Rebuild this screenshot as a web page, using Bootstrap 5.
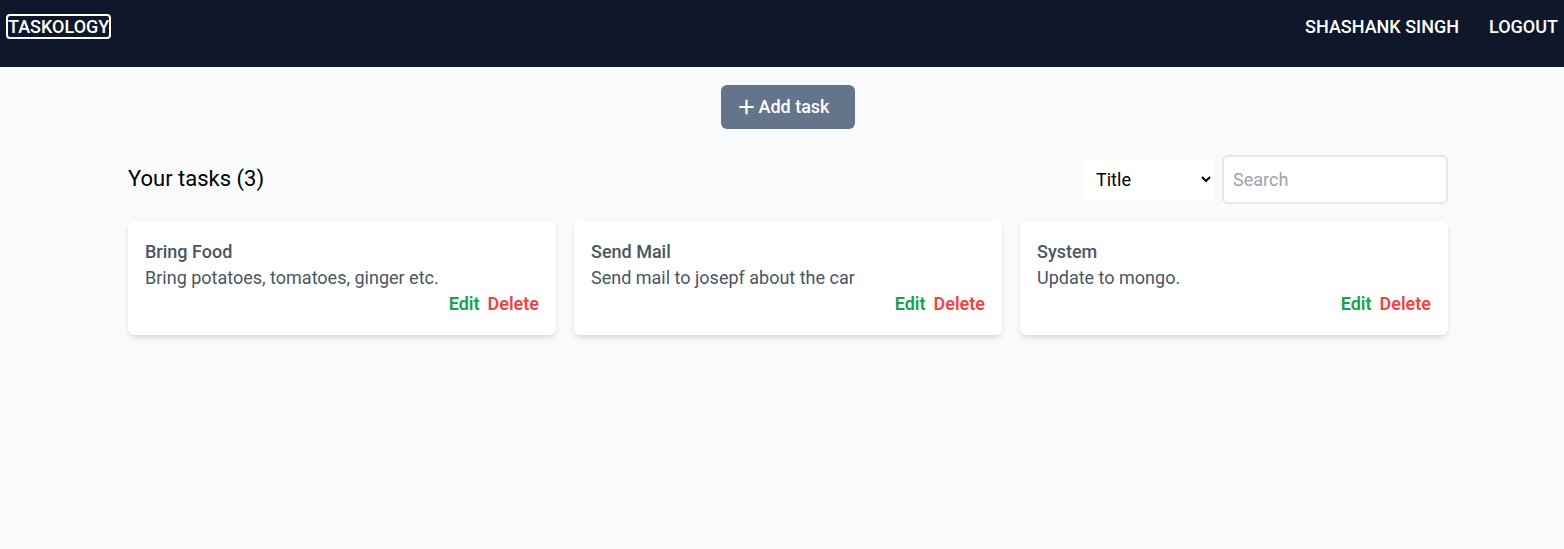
<!DOCTYPE html>
<html lang="en">
<head>
<meta charset="utf-8">
<meta name="viewport" content="width=device-width, initial-scale=1">
<title>Taskology</title>
<link href="https://cdn.jsdelivr.net/npm/bootstrap@5.3.0/dist/css/bootstrap.min.css" rel="stylesheet">
<style>
body{font-family:Roboto,sans-serif;font-size:18px;line-height:26px;background:#f8fafc;color:#000}
.topbar{background:#0f172a;min-height:67px;padding:14px 6px 0;column-gap:30px;font-weight:500}
.topbar a{color:#fff;text-decoration:none}
.topbar .brand{border:2px solid #fff;border-radius:4px;line-height:21px}
.board{padding:18px 0 48px 12px}
.add-task{--bs-btn-color:#fff;--bs-btn-bg:#64748b;--bs-btn-hover-color:#fff;--bs-btn-hover-bg:#475569;--bs-btn-font-weight:500;--bs-btn-font-size:18px;--bs-btn-line-height:26px;--bs-btn-border-width:0;--bs-btn-border-radius:6px;padding:9px 25px 9px 18px;gap:4px}
.toolbar{margin:26px 0 17px;gap:12px}
.toolbar h1{font-size:22px;font-weight:400;line-height:32px;margin:0 0 2px}
.filter{width:131px;height:41px;border:0;background:#fff;padding:0 9px;color:#000}
.search{width:226px;height:49px;border:2px solid #e5e7eb;border-radius:6px;padding:0 9px;background:#fff}
.search::placeholder{color:#9ca3af}
.tasks{display:grid;grid-template-columns:repeat(auto-fit,minmax(min(100%,320px),1fr));gap:18px}
.task{background:#fff;border-radius:6px;padding:18px 17px;box-shadow:0 4px 6px -1px rgba(0,0,0,.1),0 2px 4px -2px rgba(0,0,0,.1);color:#4b5563}
.task h2{font-size:18px;line-height:26px;font-weight:500;margin:0}
.task .actions{font-weight:600}
.task a{text-decoration:none}
.edit{color:#16a34a}
.delete{color:#ef4444}
</style>
</head>
<body>
<header>
<nav class="topbar d-flex flex-wrap align-items-start" aria-label="Main">
<a class="brand me-auto" href="#">TASKOLOGY</a>
<a href="#">SHASHANK SINGH</a>
<a href="#">LOGOUT</a>
</nav>
</header>
<main class="board">
<div class="container px-0">
<div class="d-flex justify-content-center">
<button type="button" class="btn add-task d-inline-flex align-items-center text-nowrap"><svg class="flex-shrink-0" width="15" height="16" viewBox="0 0 15 16" fill="none" stroke="#fff" stroke-width="2.2" stroke-linecap="round" aria-hidden="true"><path d="M7.5 1.5v13M1.1 8h12.8"/></svg>Add task</button>
</div>
<div class="toolbar d-flex flex-wrap align-items-center justify-content-between">
<h1>Your tasks (3)</h1>
<form class="d-flex align-items-center gap-2">
<select class="filter" aria-label="Search by"><option>Title</option><option>Description</option></select>
<input class="search" type="search" placeholder="Search" aria-label="Search">
</form>
</div>
<div class="tasks">
<article class="task"><h2>Bring Food</h2><p class="m-0">Bring potatoes, tomatoes, ginger etc.</p><div class="actions d-flex justify-content-end gap-2"><a class="edit" href="#">Edit</a><a class="delete" href="#">Delete</a></div></article>
<article class="task"><h2>Send Mail</h2><p class="m-0">Send mail to josepf about the car</p><div class="actions d-flex justify-content-end gap-2"><a class="edit" href="#">Edit</a><a class="delete" href="#">Delete</a></div></article>
<article class="task"><h2>System</h2><p class="m-0">Update to mongo.</p><div class="actions d-flex justify-content-end gap-2"><a class="edit" href="#">Edit</a><a class="delete" href="#">Delete</a></div></article>
</div>
</div>
</main>
<script src="https://cdn.jsdelivr.net/npm/bootstrap@5.3.0/dist/js/bootstrap.bundle.min.js"></script>
</body>
</html>
